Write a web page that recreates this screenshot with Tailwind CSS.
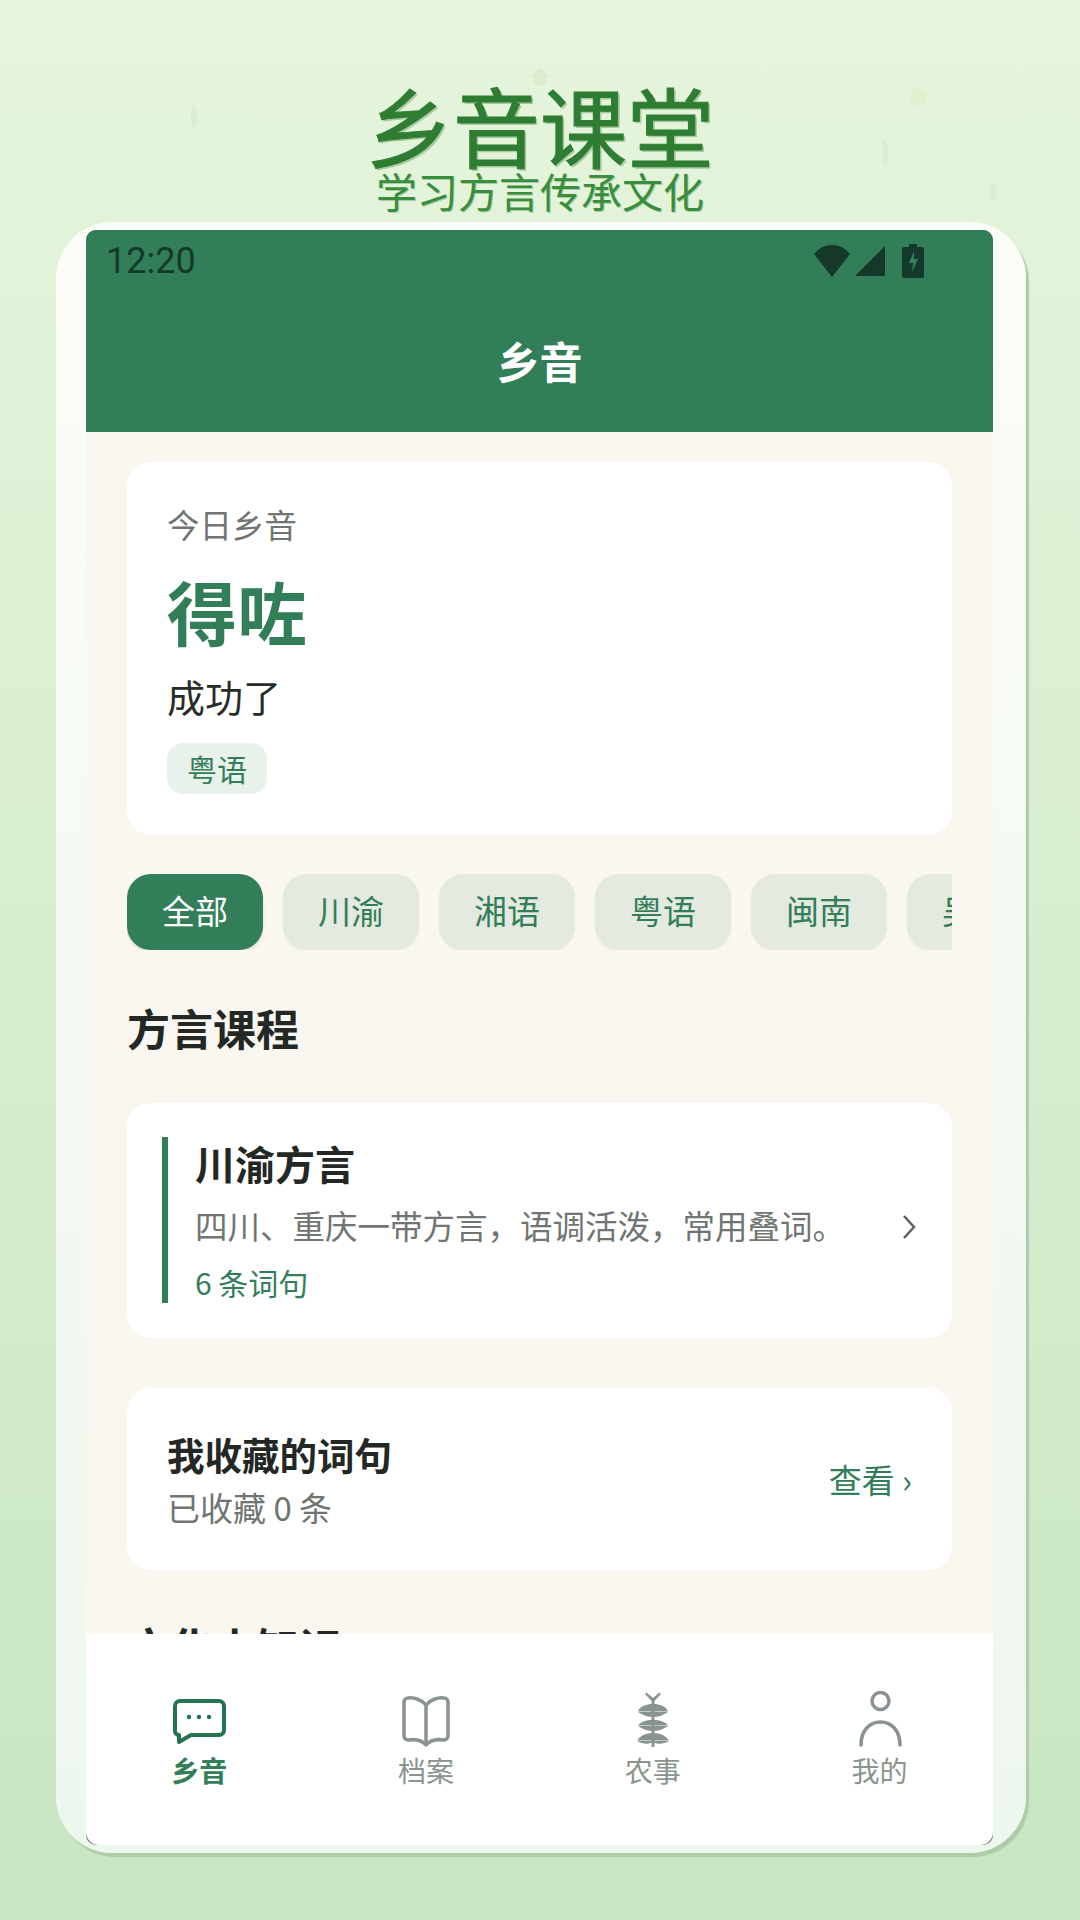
<!DOCTYPE html>
<html lang="zh-CN">
<head>
  <meta charset="UTF-8" />
  <meta name="viewport" content="width=device-width, initial-scale=1.0" />
  <title>乡音课堂</title>
  <script src="https://cdn.jsdelivr.net/npm/@tailwindcss/browser@4"></script>
</head>
<body class="font-['Noto_Sans_CJK_SC','Roboto',sans-serif]">
  <div class="relative w-[1080px] h-[1920px] overflow-hidden bg-gradient-to-b from-[#e6f5dc] to-[#c8e6c3]">
    <!-- faint background decorations -->
    <svg class="absolute left-0 top-0" width="1080" height="230" viewBox="0 0 1080 230" fill="#dbeccf">
      <ellipse cx="194" cy="116" rx="3" ry="12" />
      <path d="M540 68l10 9h-4v8h-12v-8h-4z" />
      <ellipse cx="918" cy="97" rx="8" ry="9" fill="#e0efcc" />
      <ellipse cx="885" cy="153" rx="3" ry="13" />
      <ellipse cx="993" cy="192" rx="3" ry="8" />
    </svg>

    <!-- banner -->
    <div class="relative h-[222px] pt-[76px] flex flex-col items-center">
      <h1 class="text-[87px] leading-[96px] text-[#2e7d32] [-webkit-text-stroke:1px_#2e7d32] [text-shadow:2px_2px_0_#a9cba3]">乡音课堂</h1>
      <p class="mt-[-5px] text-[41px] leading-[47px] text-[#388e3c] [text-shadow:1px_1px_0_#a9cba3]">学习方言传承文化</p>
    </div>

    <!-- phone frame -->
    <div class="relative ml-[56px] w-[970px] h-[1631px] rounded-[56px] pl-[30px] pr-[33px] py-[8px] bg-gradient-to-b from-[#fbfcf8] to-[#eef7ee] shadow-[3px_4px_1px_#aecca8]">
      <div class="h-[1615px] flex flex-col overflow-hidden rounded-[10px] bg-[#777]">
        <!-- app bar -->
        <header class="h-[202px] shrink-0 bg-[#327e59]">
          <div class="h-[62px] flex items-center justify-between pl-[20px] pr-[69px]">
            <span class="font-['Roboto',sans-serif] text-[36px] leading-none text-[#14392a]">12:20</span>
            <div class="flex items-center">
              <svg width="38" height="34" viewBox="0 0 38 34" fill="#14392a"><path d="M19 33L1 10C6 4 12 1 19 1s13 3 18 9z" /></svg>
              <svg class="ml-[4px]" width="30" height="32" viewBox="0 0 30 32" fill="#14392a"><path d="M30 1v30H0z" /></svg>
              <svg class="ml-[17px]" width="22" height="34" viewBox="0 0 22 34"><path fill="#14392a" d="M7 0h8v3h5a2 2 0 0 1 2 2v27a2 2 0 0 1-2 2H2a2 2 0 0 1-2-2V5a2 2 0 0 1 2-2h5z" /><path fill="#327e59" d="M12 7l-5 12h4l-1 9 6-13h-4z" /></svg>
            </div>
          </div>
          <h2 class="mt-[40px] text-center text-[43px] leading-[56px] font-bold text-white">乡音</h2>
        </header>

        <!-- scrolling content -->
        <main class="relative flex-1 min-h-0 overflow-hidden bg-[#f9f7f0] px-[41px] pt-[30px]">
          <section class="h-[373px] rounded-[24px] bg-white px-[40px] pt-[40px]">
            <p class="text-[32.500px] leading-[44px] text-[#6f7671]">今日乡音</p>
            <p class="mt-[21px] text-[70px] leading-[88px] font-bold text-[#327e59]">得咗</p>
            <p class="mt-[14px] text-[38px] leading-[54px] text-[#262c28]">成功了</p>
            <span class="mt-[20px] inline-block h-[51px] w-[100px] rounded-[16px] bg-[#e8f1ea] text-center text-[30px] leading-[51px] text-[#327e59]">粤语</span>
          </section>

          <div class="mt-[39px] flex gap-[20px] overflow-hidden">
            <span class="w-[136px] h-[76px] shrink-0 rounded-[24px] bg-[#327e59] text-center text-[33px] leading-[72px] text-white shadow-[0_2px_3px_rgba(0,0,0,0.12)]">全部</span>
            <span class="w-[136px] h-[76px] shrink-0 rounded-[24px] bg-[#e5eae0] text-center text-[33px] leading-[72px] text-[#327e59] shadow-[0_1px_2px_rgba(0,0,0,0.06)]">川渝</span>
            <span class="w-[136px] h-[76px] shrink-0 rounded-[24px] bg-[#e5eae0] text-center text-[33px] leading-[72px] text-[#327e59] shadow-[0_1px_2px_rgba(0,0,0,0.06)]">湘语</span>
            <span class="w-[136px] h-[76px] shrink-0 rounded-[24px] bg-[#e5eae0] text-center text-[33px] leading-[72px] text-[#327e59] shadow-[0_1px_2px_rgba(0,0,0,0.06)]">粤语</span>
            <span class="w-[136px] h-[76px] shrink-0 rounded-[24px] bg-[#e5eae0] text-center text-[33px] leading-[72px] text-[#327e59] shadow-[0_1px_2px_rgba(0,0,0,0.06)]">闽南</span>
            <span class="w-[136px] h-[76px] shrink-0 rounded-[24px] bg-[#e5eae0] text-center text-[33px] leading-[72px] text-[#327e59] shadow-[0_1px_2px_rgba(0,0,0,0.06)]">吴语</span>
          </div>

          <h3 class="mt-[47px] text-[43px] leading-[60px] font-bold text-[#232825]">方言课程</h3>

          <section class="mt-[46px] h-[235px] rounded-[24px] bg-white pl-[35px] pr-[36px] pt-[34px] flex items-center">
            <div class="self-start h-[166px] flex-1 border-l-[6px] border-[#327e59] pl-[27px]">
              <p class="text-[40px] leading-[50px] font-bold text-[#232825] mt-[1px]">川渝方言</p>
              <p class="mt-[14px] text-[32.500px] leading-[46px] text-[#6f7671] whitespace-nowrap">四川、重庆一带方言，语调活泼，常用叠词。</p>
              <p class="mt-[13px] text-[30px] leading-[42px] text-[#327e59]">6 条词句</p>
            </div>
            <svg class="self-start mt-[77px]" width="14" height="26" viewBox="0 0 14 26" fill="none" stroke="#5c635e" stroke-width="2.500"><path d="M2 2l10 11L2 24" /></svg>
          </section>

          <section class="mt-[50px] h-[182px] rounded-[24px] bg-white px-[40px] flex items-center justify-between">
            <div>
              <p class="text-[37.500px] leading-[52px] font-bold text-[#232825]">我收藏的词句</p>
              <p class="mt-[4px] text-[33px] leading-[46px] text-[#6f7671]">已收藏 0 条</p>
            </div>
            <span class="text-[33px] leading-[46px] text-[#327e59]">查看 ›</span>
          </section>

          <h3 class="mt-[46px] text-[43px] leading-[60px] font-bold text-[#232825]">文化小知识</h3>
        </main>

        <!-- bottom nav -->
        <nav class="h-[211px] shrink-0 bg-white rounded-b-[13px] grid grid-cols-4 pt-[57px] text-center">
          <div class="flex flex-col items-center">
            <svg width="64" height="56" viewBox="0 0 64 56" fill="none" stroke="#267350" stroke-width="4">
              <path d="M13 10h39a5 5 0 0 1 5 5v24a5 5 0 0 1-5 5H24L12 51v-7a4 4 0 0 1-4-5V15a5 5 0 0 1 5-5z" stroke-linejoin="round" />
              <circle cx="22" cy="26" r="2.200" fill="#267350" stroke="none" />
              <circle cx="32" cy="26" r="2.200" fill="#267350" stroke="none" />
              <circle cx="42" cy="26" r="2.200" fill="#267350" stroke="none" />
            </svg>
            <span class="mt-[8px] text-[28px] leading-[30px] font-bold text-[#327e59]">乡音</span>
          </div>
          <div class="flex flex-col items-center">
            <svg width="64" height="56" viewBox="0 0 64 56" fill="none" stroke="#8a948e" stroke-width="3.500" stroke-linejoin="round">
              <path d="M32 14C28 9 20 6 14 7a4 4 0 0 0-4 4v34a4 4 0 0 0 4 4c7-1 14 0 18 5 4-5 11-6 18-5a4 4 0 0 0 4-4V11a4 4 0 0 0-4-4c-6-1-14 2-18 7z" />
              <path d="M32 14v38" />
            </svg>
            <span class="mt-[8px] text-[28px] leading-[30px] text-[#8a948e]">档案</span>
          </div>
          <div class="flex flex-col items-center">
            <svg width="64" height="56" viewBox="0 0 64 56" fill="#8a948e">
              <path d="M24 3l1.500-1.500L32 7l6.500-5.500L40 3l-6.500 7V56h-3V10z" />
              <path d="M32 13c-7 0-13 2-15 7.500h30c-2-5.500-8-7.500-15-7.500z" />
              <path d="M17 21c4 3 10 5 15 5s11-2 15-5z" />
              <path d="M32 29c-7 0-13 2-15 5.500h30c-2-3.500-8-5.500-15-5.500z" />
              <path d="M17 35c4 3 10 5 15 5s11-2 15-5z" />
              <path d="M32 42c-8 0-13 3-16 7.500h32c-3-4.500-8-7.500-16-7.500z" />
              <path d="M16 50c5 3 11 4 16 1 5 3 11 2 16-1z" />
            </svg>
            <span class="mt-[8px] text-[28px] leading-[30px] text-[#8a948e]">农事</span>
          </div>
          <div class="flex flex-col items-center">
            <svg width="64" height="56" viewBox="0 0 64 56" fill="none" stroke="#8a948e" stroke-width="3.500" stroke-linecap="round">
              <circle cx="32.500" cy="10" r="8.500" />
              <path d="M13 54c0-14 8-23 19.500-23S52 40 52 54" />
            </svg>
            <span class="mt-[8px] text-[28px] leading-[30px] text-[#8a948e]">我的</span>
          </div>
        </nav>
      </div>
    </div>
  </div>
</body>
</html>
